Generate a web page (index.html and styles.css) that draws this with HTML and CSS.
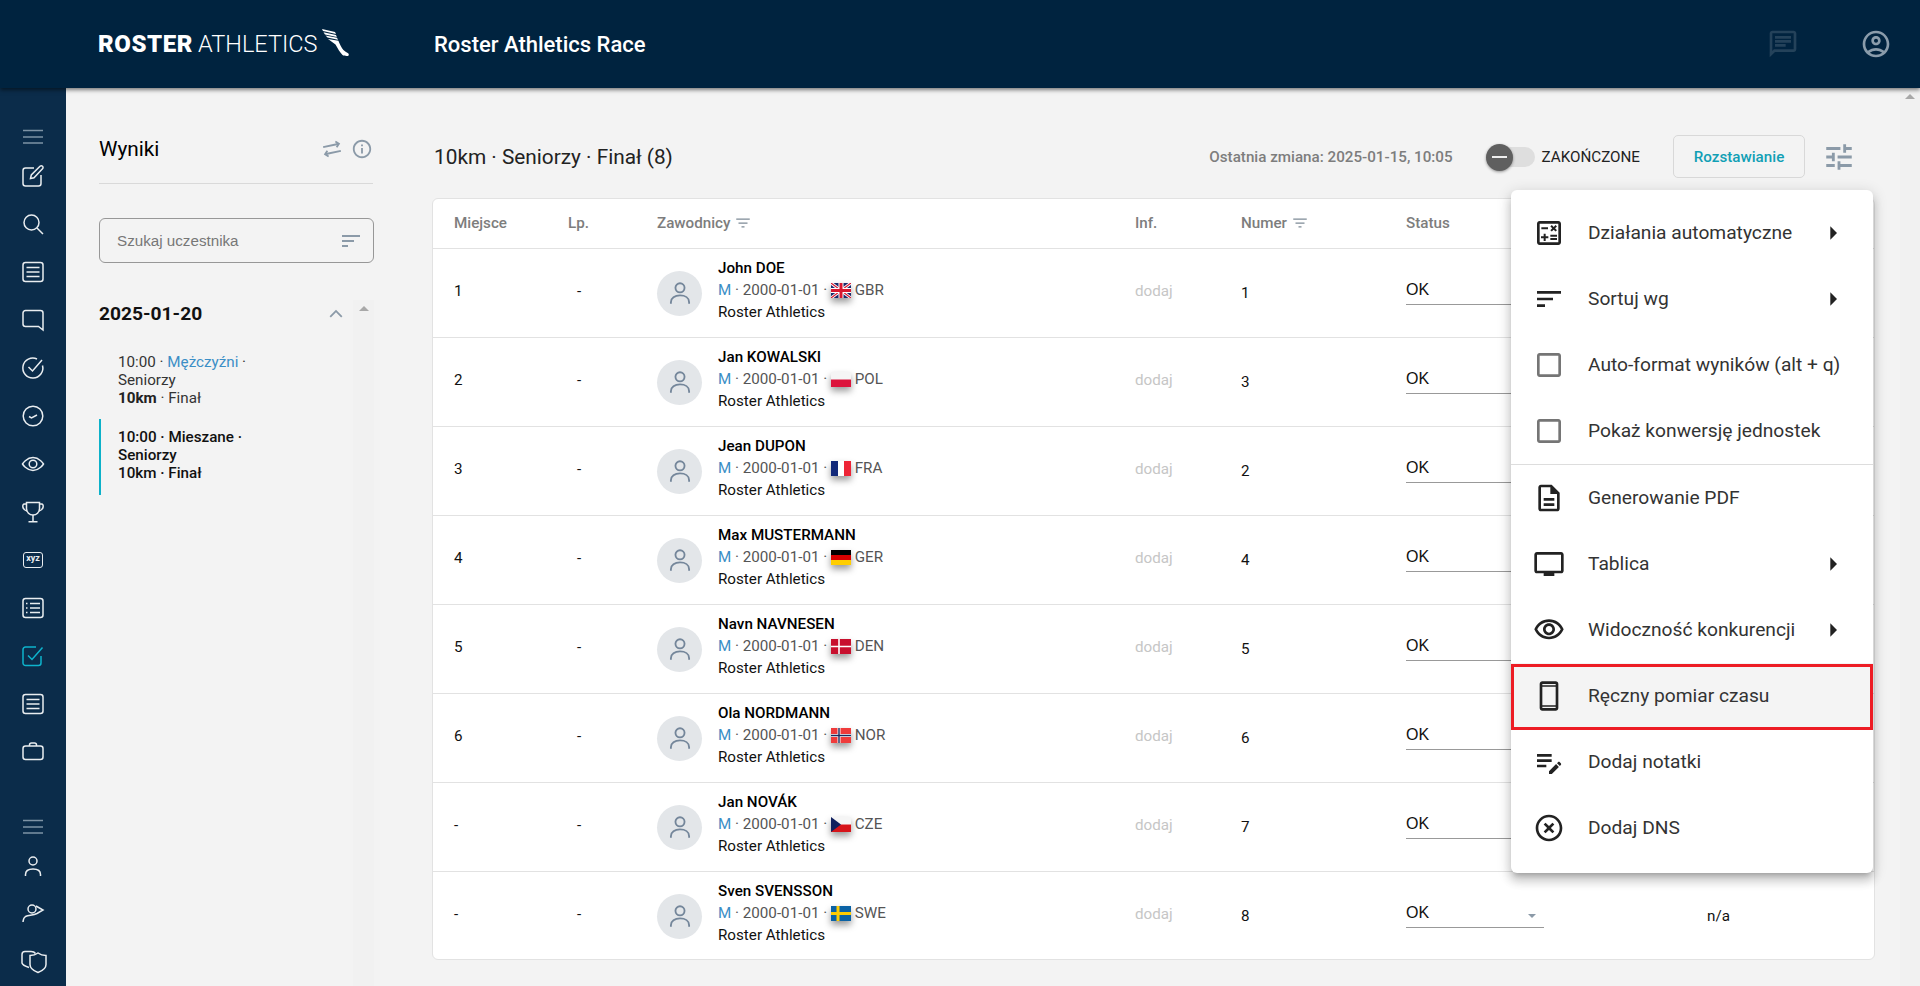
FILE: index.html
```html
<!DOCTYPE html>
<html lang="pl">
<head>
    <meta charset="UTF-8">
    <meta name="viewport" content="width=device-width, initial-scale=1.0">
    <title>Roster Athletics Race</title>
    <link rel="stylesheet" href="styles.css">
</head>
<body>
    <!-- shared icons -->
    <svg class="sprite" xmlns="http://www.w3.org/2000/svg">
        <symbol id="i-person" viewBox="0 0 24 24"><circle cx="12" cy="7.2" r="4.2"/><path d="M3.6 22v-1.5c0-4 3.6-6.3 8.4-6.3s8.4 2.3 8.4 6.3V22"/></symbol>
        <symbol id="i-filter" viewBox="0 0 24 24"><path d="M10 18h4v-1.6h-4zM3 6v1.6h18V6zm3 6.9h12v-1.6H6z"/></symbol>
        <symbol id="i-sort" viewBox="0 0 24 24"><path d="M3 18h6v-2H3zM3 6v2h18V6zm0 7h12v-2H3z"/></symbol>
        <symbol id="i-arrow" viewBox="0 0 24 24"><path d="M10 17l5-5-5-5z"/></symbol>
        <symbol id="i-box" viewBox="0 0 24 24"><path d="M19 5v14H5V5h14m0-2H5c-1.1 0-2 .9-2 2v14c0 1.1.9 2 2 2h14c1.1 0 2-.9 2-2V5c0-1.1-.9-2-2-2z"/></symbol>
        <symbol id="f-gbr" viewBox="0 0 20 15"><rect width="20" height="15" fill="#1b2a6b"/><path d="M0 0l20 15M20 0L0 15" stroke="#fff" stroke-width="3"/><path d="M0 0l20 15M20 0L0 15" stroke="#d8172f" stroke-width="1.2"/><path d="M10 0v15M0 7.5h20" stroke="#fff" stroke-width="5"/><path d="M10 0v15M0 7.5h20" stroke="#d8172f" stroke-width="3"/></symbol>
        <symbol id="f-pol" viewBox="0 0 20 15"><rect width="20" height="15" fill="#f5f5f5"/><rect y="7.5" width="20" height="7.5" fill="#dc143c"/></symbol>
        <symbol id="f-fra" viewBox="0 0 20 15"><rect width="7" height="15" fill="#12297a"/><rect x="7" width="6" height="15" fill="#fff"/><rect x="13" width="7" height="15" fill="#ee2436"/></symbol>
        <symbol id="f-ger" viewBox="0 0 20 15"><rect width="20" height="5" fill="#000"/><rect y="5" width="20" height="5" fill="#d80000"/><rect y="10" width="20" height="5" fill="#ffce00"/></symbol>
        <symbol id="f-den" viewBox="0 0 20 15"><rect width="20" height="15" fill="#c8102e"/><path d="M8 0v15M0 7.5h20" stroke="#fff" stroke-width="1.6"/></symbol>
        <symbol id="f-nor" viewBox="0 0 20 15"><rect width="20" height="15" fill="#ef3b3b"/><path d="M8 0v15M0 7.5h20" stroke="#fff" stroke-width="3"/><path d="M8 0v15M0 7.5h20" stroke="#1b2a5e" stroke-width="1.4"/></symbol>
        <symbol id="f-cze" viewBox="0 0 20 15"><rect width="20" height="7.5" fill="#f5f5f5"/><rect y="7.5" width="20" height="7.5" fill="#d7141a"/><path d="M0 0l10 7.5L0 15z" fill="#11215f"/></symbol>
        <symbol id="f-swe" viewBox="0 0 20 15"><rect width="20" height="15" fill="#0a62a5"/><path d="M7 0v15M0 7.5h20" stroke="#fecc02" stroke-width="3"/></symbol>
    </svg>

    <header class="topbar">
        <div class="logo">
            <span class="logo-bold">ROSTER</span>
            <span class="logo-light">ATHLETICS</span>
            <svg class="logo-wing" viewBox="0 0 28 28" fill="#fff">
                <path d="M1 0l13 3 1 2L2 2zM2.500 3.200L15 6l.8 2L4 5.400zM4.500 6.600L16 8.800l1 2L6.500 8.600zM7 10l10.400 1.800c1 3 3 6.800 5 9.200 1.500 1.500 3.800 2.500 5 3.500.6.800.6 2-.4 2.400-1 .2-4 .2-5.500-.8-2.500-2.500-5-7-7-10.500z"/>
            </svg>
        </div>
        <div class="app-title">Roster Athletics Race</div>
        <div class="topbar-icons">
            <svg class="topbar-chat" viewBox="0 0 24 24"><path d="M20 2H4c-1.100 0-1.990.9-1.990 2L2 22l4-4h14c1.100 0 2-.9 2-2V4c0-1.100-.9-2-2-2zm0 14H5.170L4 17.170V4h16v12zM6 12h8v2H6zm0-3h12v2H6zm0-3h12v2H6z"/></svg>
            <svg class="topbar-user" viewBox="0 0 24 24"><path d="M12 2C6.480 2 2 6.480 2 12s4.480 10 10 10 10-4.480 10-10S17.520 2 12 2zM7.350 18.500C8.660 17.560 10.260 17 12 17s3.340.56 4.650 1.500C15.340 19.440 13.740 20 12 20s-3.340-.56-4.650-1.500zm10.790-1.380C16.450 15.800 14.320 15 12 15s-4.450.8-6.140 2.120C4.700 15.730 4 13.950 4 12c0-4.420 3.580-8 8-8s8 3.580 8 8c0 1.950-.7 3.730-1.860 5.120z"/><path d="M12 6c-1.930 0-3.500 1.570-3.500 3.500S10.070 13 12 13s3.500-1.570 3.500-3.500S13.930 6 12 6zm0 5c-.83 0-1.500-.67-1.500-1.500S11.170 8 12 8s1.500.67 1.500 1.500S12.830 11 12 11z"/></svg>
        </div>
    </header>

    <div class="page">
        <nav class="sidebar">
            <svg class="nav-icon nav-dim" viewBox="0 0 24 24"><path d="M2 5.500h20M2 12h20M2 18h20"/></svg>
            <svg class="nav-icon" viewBox="0 0 24 24"><path d="M13 4H4.500A2.500 2.500 0 0 0 2 6.500v13A2.500 2.500 0 0 0 4.500 22h13a2.500 2.500 0 0 0 2.500-2.500V11"/><path d="M9.500 14.500l.8-3.500L19 2.300c.8-.7 1.800-.7 2.500 0s.7 1.800 0 2.500L13 13.700z"/></svg>
            <svg class="nav-icon" viewBox="0 0 24 24"><circle cx="10.500" cy="10.500" r="7.500"/><path d="M16 16l6 6"/></svg>
            <svg class="nav-icon" viewBox="0 0 24 24"><rect x="2" y="2.500" width="20" height="19" rx="2.500"/><path d="M5.500 7.500h13M5.500 12h13M5.500 16.500h13"/></svg>
            <svg class="nav-icon" viewBox="0 0 24 24"><path d="M4.500 2.500h15A2.500 2.500 0 0 1 22 5v17l-4.500-3.500h-13A2.500 2.500 0 0 1 2 16V5a2.500 2.500 0 0 1 2.500-2.500z"/></svg>
            <svg class="nav-icon" viewBox="0 0 24 24"><path d="M21.500 9.500A10 10 0 1 1 16 3"/><path d="M7.500 11l4 4 9.500-11"/></svg>
            <svg class="nav-icon" viewBox="0 0 24 24"><circle cx="12" cy="12" r="9.800"/><path d="M8 12.500l2.500 1.500 5.500-3"/></svg>
            <svg class="nav-icon" viewBox="0 0 24 24"><path d="M1.500 12S5.500 5.500 12 5.500 22.500 12 22.500 12 18.500 18.500 12 18.500 1.500 12 1.500 12z"/><circle cx="12" cy="12" r="3.800"/></svg>
            <svg class="nav-icon" viewBox="0 0 24 24"><path d="M5.500 2.500h13v6c0 4-3 6.500-6.500 6.500s-6.500-2.500-6.500-6.500z"/><path d="M5.500 4H3.500C2 4 1.500 5.500 2 7.500c.4 1.500 2 3 4 3.500M18.500 4h2c1.500 0 2 1.500 1.500 3.500-.4 1.500-2 3-4 3.500M12 15v6M7.500 21.800h9"/></svg>
            <div class="nav-xyz">xyz</div>
            <svg class="nav-icon" viewBox="0 0 24 24"><rect x="2" y="2.500" width="20" height="19" rx="2.500"/><path d="M5 7.500h1.500M5 12h1.500M5 16.500h1.500M9 7.500h10M9 12h10M9 16.500h10"/></svg>
            <svg class="nav-icon nav-active" viewBox="0 0 24 24"><path d="M20 12v7a2.500 2.500 0 0 1-2.500 2.500h-13A2.500 2.500 0 0 1 2 19V5.500A2.500 2.500 0 0 1 4.500 3H15"/><path d="M7 11.500l4 4L21.500 3.500"/></svg>
            <svg class="nav-icon" viewBox="0 0 24 24"><rect x="2" y="2.500" width="20" height="19" rx="2.500"/><path d="M5.500 7.500h13M5.500 12h13M5.500 16.500h13"/></svg>
            <svg class="nav-icon" viewBox="0 0 24 24"><rect x="2" y="6" width="20" height="13.500" rx="2.500"/><path d="M8.500 6V5a2 2 0 0 1 2-2h3a2 2 0 0 1 2 2v1"/></svg>
            <div class="nav-gap"></div>
            <svg class="nav-icon nav-dim" viewBox="0 0 24 24"><path d="M2 5.500h20M2 12h20M2 18h20"/></svg>
            <svg class="nav-icon" viewBox="0 0 24 24"><circle cx="12" cy="7" r="4"/><path d="M4.500 22v-1.500c0-3.800 3-5.500 7.500-5.500s7.500 1.700 7.500 5.500V22"/></svg>
            <svg class="nav-icon" viewBox="0 0 24 24"><circle cx="11" cy="7" r="4"/><path d="M15 4l7 4-6 3.500c-4 2-8 1.500-11.500 3C3 15.500 2.200 17.500 2 20"/></svg>
            <svg class="nav-icon nav-wide" viewBox="0 0 28 24"><path d="M9 17.500c-3-1-6.500-2.500-7-4.500V4.500C2 2.500 3 1.500 5 1.500h6c2 0 3.500.5 4.500 2"/><path d="M10 5.500c3.500 0 6-1 8-2.500 2 1.500 4.500 2.500 8 2.500v9c0 4-4 6.500-8 8-4-1.500-8-4-8-8z"/></svg>
        </nav>

        <main class="main">
            <section class="panel">
                <div class="panel-head">
                    <h1 class="panel-title">Wyniki</h1>
                    <svg class="panel-swap" viewBox="0 0 24 24"><path d="M7.410 13.410L6 12l-4 4 4 4 1.410-1.410L5.830 17H21v-2H5.830zm9.180-2.820L18 12l4-4-4-4-1.410 1.410L18.170 7H3v2h15.170z"/></svg>
                    <svg class="panel-info" viewBox="0 0 24 24"><path d="M11 7h2v2h-2zm0 4h2v6h-2zm1-9C6.480 2 2 6.480 2 12s4.480 10 10 10 10-4.480 10-10S17.520 2 12 2zm0 18c-4.410 0-8-3.590-8-8s3.590-8 8-8 8 3.590 8 8-3.590 8-8 8z"/></svg>
                </div>
                <div class="search">
                    <span class="search-text">Szukaj uczestnika</span>
                    <svg class="search-sort"><use href="#i-sort"/></svg>
                </div>
                <div class="date-row">
                    <span class="date">2025-01-20</span>
                    <svg class="date-chevron" viewBox="0 0 24 24"><path d="M12 8.500l-7 7 1.400 1.400 5.600-5.600 5.600 5.600 1.400-1.400z"/></svg>
                </div>
                <div class="event">
                    <div>10:00 · <span class="event-link">Mężczyźni</span> ·</div>
                    <div>Seniorzy</div>
                    <div><b>10km</b> · Finał</div>
                </div>
                <div class="event event-current">
                    <div>10:00 · Mieszane ·</div>
                    <div>Seniorzy</div>
                    <div>10km · Finał</div>
                </div>
                <div class="panel-scroll"><span class="scroll-up"></span></div>
            </section>

            <section class="results">
                <div class="toolbar">
                    <h2 class="results-title">10km · Seniorzy · Finał (8)</h2>
                    <span class="last-change">Ostatnia zmiana: 2025-01-15, 10:05</span>
                    <div class="toggle"><span class="toggle-thumb"></span></div>
                    <span class="toggle-label">ZAKOŃCZONE</span>
                    <button class="seed-button">Rozstawianie</button>
                    <svg class="tune" viewBox="0 0 24 24"><path d="M3 17v2h6v-2H3zM3 5v2h10V5H3zm10 16v-2h8v-2h-8v-2h-2v6h2zM7 9v2H3v2h4v2h2V9H7zm14 4v-2H11v2h10zm-6-4h2V7h4V5h-4V3h-2v6z"/></svg>
                </div>

                <div class="card">
                    <div class="row row-head">
                        <div>Miejsce</div>
                        <div>Lp.</div>
                        <div class="with-filter">Zawodnicy <svg class="head-filter"><use href="#i-filter"/></svg></div>
                        <div>Inf.</div>
                        <div class="with-filter">Numer <svg class="head-filter"><use href="#i-filter"/></svg></div>
                        <div>Status</div>
                    </div>

                    <div class="row">
                        <div>1</div><div class="lp">-</div>
                        <div class="athlete">
                            <div class="avatar"><svg><use href="#i-person"/></svg></div>
                            <div class="athlete-text">
                                <div class="athlete-name">John DOE</div>
                                <div class="athlete-meta"><span class="gender">M</span> · 2000-01-01 · <svg class="flag"><use href="#f-gbr"/></svg> GBR</div>
                                <div>Roster Athletics</div>
                            </div>
                        </div>
                        <div class="add">dodaj</div><div class="num">1</div>
                        <div class="select">OK</div><div class="num">n/a</div>
                    </div>
                    <div class="row">
                        <div>2</div><div class="lp">-</div>
                        <div class="athlete">
                            <div class="avatar"><svg><use href="#i-person"/></svg></div>
                            <div class="athlete-text">
                                <div class="athlete-name">Jan KOWALSKI</div>
                                <div class="athlete-meta"><span class="gender">M</span> · 2000-01-01 · <svg class="flag"><use href="#f-pol"/></svg> POL</div>
                                <div>Roster Athletics</div>
                            </div>
                        </div>
                        <div class="add">dodaj</div><div class="num">3</div>
                        <div class="select">OK</div><div class="num">n/a</div>
                    </div>
                    <div class="row">
                        <div>3</div><div class="lp">-</div>
                        <div class="athlete">
                            <div class="avatar"><svg><use href="#i-person"/></svg></div>
                            <div class="athlete-text">
                                <div class="athlete-name">Jean DUPON</div>
                                <div class="athlete-meta"><span class="gender">M</span> · 2000-01-01 · <svg class="flag"><use href="#f-fra"/></svg> FRA</div>
                                <div>Roster Athletics</div>
                            </div>
                        </div>
                        <div class="add">dodaj</div><div class="num">2</div>
                        <div class="select">OK</div><div class="num">n/a</div>
                    </div>
                    <div class="row">
                        <div>4</div><div class="lp">-</div>
                        <div class="athlete">
                            <div class="avatar"><svg><use href="#i-person"/></svg></div>
                            <div class="athlete-text">
                                <div class="athlete-name">Max MUSTERMANN</div>
                                <div class="athlete-meta"><span class="gender">M</span> · 2000-01-01 · <svg class="flag"><use href="#f-ger"/></svg> GER</div>
                                <div>Roster Athletics</div>
                            </div>
                        </div>
                        <div class="add">dodaj</div><div class="num">4</div>
                        <div class="select">OK</div><div class="num">n/a</div>
                    </div>
                    <div class="row">
                        <div>5</div><div class="lp">-</div>
                        <div class="athlete">
                            <div class="avatar"><svg><use href="#i-person"/></svg></div>
                            <div class="athlete-text">
                                <div class="athlete-name">Navn NAVNESEN</div>
                                <div class="athlete-meta"><span class="gender">M</span> · 2000-01-01 · <svg class="flag"><use href="#f-den"/></svg> DEN</div>
                                <div>Roster Athletics</div>
                            </div>
                        </div>
                        <div class="add">dodaj</div><div class="num">5</div>
                        <div class="select">OK</div><div class="num">n/a</div>
                    </div>
                    <div class="row">
                        <div>6</div><div class="lp">-</div>
                        <div class="athlete">
                            <div class="avatar"><svg><use href="#i-person"/></svg></div>
                            <div class="athlete-text">
                                <div class="athlete-name">Ola NORDMANN</div>
                                <div class="athlete-meta"><span class="gender">M</span> · 2000-01-01 · <svg class="flag"><use href="#f-nor"/></svg> NOR</div>
                                <div>Roster Athletics</div>
                            </div>
                        </div>
                        <div class="add">dodaj</div><div class="num">6</div>
                        <div class="select">OK</div><div class="num">n/a</div>
                    </div>
                    <div class="row">
                        <div>-</div><div class="lp">-</div>
                        <div class="athlete">
                            <div class="avatar"><svg><use href="#i-person"/></svg></div>
                            <div class="athlete-text">
                                <div class="athlete-name">Jan NOVÁK</div>
                                <div class="athlete-meta"><span class="gender">M</span> · 2000-01-01 · <svg class="flag"><use href="#f-cze"/></svg> CZE</div>
                                <div>Roster Athletics</div>
                            </div>
                        </div>
                        <div class="add">dodaj</div><div class="num">7</div>
                        <div class="select">OK</div><div class="num">n/a</div>
                    </div>
                    <div class="row">
                        <div>-</div><div class="lp">-</div>
                        <div class="athlete">
                            <div class="avatar"><svg><use href="#i-person"/></svg></div>
                            <div class="athlete-text">
                                <div class="athlete-name">Sven SVENSSON</div>
                                <div class="athlete-meta"><span class="gender">M</span> · 2000-01-01 · <svg class="flag"><use href="#f-swe"/></svg> SWE</div>
                                <div>Roster Athletics</div>
                            </div>
                        </div>
                        <div class="add">dodaj</div><div class="num">8</div>
                        <div class="select">OK</div><div class="num">n/a</div>
                    </div>
                </div>
            </section>

            <div class="page-scroll"><span class="scroll-up"></span></div>

            <!-- dropdown opened from the tune icon -->
            <div class="menu">
                <div class="menu-item">
                    <svg class="menu-icon" viewBox="0 0 24 24"><path d="M19 3H5c-1.100 0-2 .9-2 2v14c0 1.100.9 2 2 2h14c1.100 0 2-.9 2-2V5c0-1.100-.9-2-2-2zm0 16H5V5h14v14z"/><path d="M6.250 7.720h5v1.500h-5zM13 15.750h5v1.500h-5zM13 13.250h5v1.500h-5zM8 18h1.500v-2h2v-1.500h-2v-2H8v2H6V16h2zM14.090 10.950l1.410-1.410 1.410 1.410 1.060-1.060-1.410-1.420 1.410-1.410L16.910 6 15.500 7.410 14.090 6l-1.060 1.060 1.410 1.410-1.410 1.420z"/></svg>
                    <span>Działania automatyczne</span>
                    <svg class="menu-arrow"><use href="#i-arrow"/></svg>
                </div>
                <div class="menu-item">
                    <svg class="menu-icon"><use href="#i-sort"/></svg>
                    <span>Sortuj wg</span>
                    <svg class="menu-arrow"><use href="#i-arrow"/></svg>
                </div>
                <div class="menu-item">
                    <svg class="menu-icon menu-check"><use href="#i-box"/></svg>
                    <span>Auto-format wyników (alt + q)</span>
                </div>
                <div class="menu-item">
                    <svg class="menu-icon menu-check"><use href="#i-box"/></svg>
                    <span>Pokaż konwersję jednostek</span>
                </div>
                <div class="menu-divider"></div>
                <div class="menu-item">
                    <svg class="menu-icon" viewBox="0 0 24 24"><path d="M8 16h8v2H8zm0-4h8v2H8zm6-10H6c-1.100 0-2 .9-2 2v16c0 1.100.89 2 1.990 2H18c1.100 0 2-.9 2-2V8l-6-6zm4 18H6V4h7v5h5v11z"/></svg>
                    <span>Generowanie PDF</span>
                </div>
                <div class="menu-item">
                    <svg class="menu-icon" viewBox="0 0 24 24"><path d="M21 3H3c-1.100 0-2 .9-2 2v12c0 1.100.9 2 2 2h5v2h8v-2h5c1.100 0 1.990-.9 1.990-2L23 5c0-1.100-.9-2-2-2zm0 14H3V5h18v12z"/></svg>
                    <span>Tablica</span>
                    <svg class="menu-arrow"><use href="#i-arrow"/></svg>
                </div>
                <div class="menu-item">
                    <svg class="menu-icon" viewBox="0 0 24 24"><path d="M12 6c3.790 0 7.170 2.130 8.820 5.500C19.170 14.870 15.790 17 12 17s-7.170-2.130-8.820-5.500C4.830 8.130 8.210 6 12 6m0-2C7 4 2.730 7.110 1 11.500 2.730 15.890 7 19 12 19s9.270-3.110 11-7.500C21.270 7.110 17 4 12 4zm0 5c1.380 0 2.500 1.120 2.500 2.500S13.380 14 12 14s-2.500-1.120-2.500-2.500S10.620 9 12 9m0-2c-2.480 0-4.500 2.020-4.500 4.500S9.520 16 12 16s4.500-2.020 4.500-4.500S14.480 7 12 7z"/></svg>
                    <span>Widoczność konkurencji</span>
                    <svg class="menu-arrow"><use href="#i-arrow"/></svg>
                </div>
                <div class="menu-item menu-item-marked">
                    <svg class="menu-icon" viewBox="0 0 24 24"><path d="M17 1.010L7 1c-1.100 0-2 .9-2 2v18c0 1.100.9 2 2 2h10c1.100 0 2-.9 2-2V3c0-1.100-.9-1.990-2-1.990zM17 21H7v-1h10zm0-2H7V5h10zM7 4V3h10v1z"/></svg>
                    <span>Ręczny pomiar czasu</span>
                </div>
                <div class="menu-item">
                    <svg class="menu-icon" viewBox="0 0 24 24"><path d="M3 10h11v2H3zm0-2h11V6H3zm0 8h7v-2H3zm15.010-3.130l.71-.71c.39-.39 1.020-.39 1.410 0l.71.71c.39.39.39 1.020 0 1.410l-.71.71zm-.71.71l-5.300 5.300V21h2.120l5.300-5.300z"/></svg>
                    <span>Dodaj notatki</span>
                </div>
                <div class="menu-item">
                    <svg class="menu-icon" viewBox="0 0 24 24"><path d="M14.590 8L12 10.590 9.410 8 8 9.410 10.590 12 8 14.590 9.410 16 12 13.410 14.590 16 16 14.590 13.410 12 16 9.410 14.590 8zM12 2C6.470 2 2 6.470 2 12s4.470 10 10 10 10-4.470 10-10S17.530 2 12 2zm0 18c-4.410 0-8-3.590-8-8s3.590-8 8-8 8 3.590 8 8-3.590 8-8 8z"/></svg>
                    <span>Dodaj DNS</span>
                </div>
            </div>
        </main>
    </div>
</body>
</html>
```

FILE: styles.css
```css
* {
    box-sizing: border-box;
}

html, body {
    height: 986px;
    overflow: hidden;
}

body {
    margin: 0;
    font-family: Roboto, "Liberation Sans", sans-serif;
    font-size: 15.2px;
    color: #111;
    background-color: #f3f3f3;
}

.sprite {
    display: none;
}

/* Top bar */
.topbar {
    position: relative;
    z-index: 5;
    display: flex;
    align-items: center;
    height: 88px;
    padding-left: 98px;
    background-color: #00233f;
    color: #fff;
    box-shadow: 0 2px 4px rgba(0,0,0,0.5);
}

.logo {
    display: flex;
    align-items: center;
    width: 336px;
    font-size: 24px;
}

.logo-bold {
    font-weight: 900;
    letter-spacing: 0.6px;
    margin-right: 5px;
}

.logo-light {
    font-size: 23.5px;
    font-weight: 300;
}

.logo-wing {
    width: 28px;
    height: 28px;
    margin-left: 4px;
    margin-top: -2px;
}

.app-title {
    font-size: 22px;
    font-weight: 500;
}

.topbar-icons {
    display: flex;
    align-items: center;
    margin-left: auto;
    padding-right: 28px;
    gap: 61px;
}

.topbar-chat {
    width: 32px;
    height: 32px;
    fill: #24425a;
}

.topbar-user {
    width: 32px;
    height: 32px;
    fill: #8a9cab;
}

/* Sidebar */
.page {
    display: flex;
    height: 898px;
    overflow: hidden;
}

.sidebar {
    display: flex;
    flex-direction: column;
    align-items: center;
    gap: 24px;
    width: 66px;
    padding-top: 37px;
    flex-shrink: 0;
    background-color: #0b2c4a;
}

.nav-icon {
    width: 24px;
    height: 24px;
    flex-shrink: 0;
    fill: none;
    stroke: #e9edf0;
    stroke-width: 1.5;
}

.nav-dim {
    margin-bottom: -9px;
    stroke: #7e93a5;
}

.nav-active {
    stroke: #0eb3cc;
}

.nav-wide {
    width: 28px;
    margin-left: 1px;
}

.nav-xyz {
    flex-shrink: 0;
    width: 20px;
    height: 16px;
    margin: 4px 0;
    border: 1.500px solid #e9edf0;
    border-radius: 3px;
    color: #e9edf0;
    font-size: 9px;
    font-weight: 700;
    line-height: 11px;
    text-align: center;
}

.nav-gap {
    flex-shrink: 0;
    height: 3px;
}

/* Left panel */
.main {
    position: relative;
    display: flex;
    flex: 1;
    min-width: 0;
}

.panel {
    position: relative;
    width: 366px;
    flex-shrink: 0;
    padding: 40px 59px 0 33px;
}

.panel-head {
    display: flex;
    align-items: center;
    height: 56px;
    padding-top: 2px;
    padding-bottom: 16px;
    border-bottom: 1px solid #d9d9d9;
}

.panel-title {
    margin: 0 auto 0 0;
    font-size: 20.800px;
    font-weight: 400;
    color: #000;
}

.panel-swap {
    width: 22px;
    height: 22px;
    fill: #8b9aa8;
    transform: rotate(-12deg);
}

.panel-info {
    width: 22px;
    height: 22px;
    margin-left: 8px;
    fill: #8b9aa8;
}

.search {
    display: flex;
    align-items: center;
    justify-content: space-between;
    height: 45px;
    margin-top: 34px;
    margin-right: -1px;
    padding: 0 10px 0 17px;
    border: 1px solid #979797;
    border-radius: 6px;
}

.search-text {
    font-family: "Liberation Sans", sans-serif;
    color: #777;
}

.search-sort {
    width: 24px;
    height: 24px;
    fill: #8b9aa8;
}

.date-row {
    display: flex;
    align-items: center;
    justify-content: space-between;
    height: 30px;
    margin-top: 35px;
    margin-bottom: 16px;
    padding-right: 26px;
}

.date {
    font-size: 19.200px;
    font-weight: 700;
    color: #111;
}

.date-chevron {
    width: 22px;
    height: 22px;
    fill: #8b9aa8;
}

.event {
    padding: 9px 20px 9px 19px;
    line-height: 18px;
    color: #333;
}

.event + .event {
    margin-top: 3px;
}

.event b {
    font-weight: 700;
    color: #222;
}

.event-link {
    color: #3b8ec6;
}

.event-current {
    padding-bottom: 13px;
    padding-left: 17px;
    border-left: 2px solid #0cb1c9;
    font-weight: 500;
    color: #111;
}

.panel-scroll {
    position: absolute;
    top: 212px;
    bottom: 0;
    left: 287px;
    width: 21px;
    background-color: #f1f1f1;
}

.scroll-up {
    display: block;
    width: 0;
    height: 0;
    margin: 0 auto;
    border-left: 5px solid transparent;
    border-right: 5px solid transparent;
    border-bottom: 5px solid #a8a8a8;
}

.panel-scroll .scroll-up {
    margin-top: 6px;
}

/* Results */
.results {
    flex: 1;
    min-width: 0;
    padding-top: 47px;
    padding-right: 25px;
}

.toolbar {
    display: flex;
    align-items: center;
    height: 43px;
    margin-bottom: 20px;
    padding-left: 2px;
}

.results-title {
    margin: 0 auto 0 0;
    font-size: 20.800px;
    font-weight: 400;
    color: #222;
}

.last-change {
    font-weight: 500;
    color: #7d7d7d;
}

.toggle {
    position: relative;
    width: 35px;
    height: 20px;
    margin-left: 47px;
    border-radius: 0 10px 10px 0;
    background-color: #dedede;
}

.toggle-thumb {
    position: absolute;
    top: -3px;
    left: -14px;
    width: 27px;
    height: 27px;
    border-radius: 50%;
    background-color: #5f5f5f;
    box-shadow: 0 1px 3px rgba(0,0,0,0.4);
}

.toggle-thumb:after {
    content: '';
    position: absolute;
    top: 12px;
    left: 6px;
    width: 15px;
    height: 2.500px;
    background-color: #eee;
}

.toggle-label {
    margin-left: 7px;
    color: #222;
}

.seed-button {
    width: 132px;
    height: 43px;
    margin-left: 33px;
    border: 1px solid #d8d8d8;
    border-radius: 5px;
    background: transparent;
    font-family: Roboto, sans-serif;
    font-size: 15.200px;
    font-weight: 500;
    color: #119fb5;
}

.tune {
    width: 34px;
    height: 34px;
    margin-left: 17px;
    margin-right: 19px;
    fill: #8b9aa8;
}

.card {
    height: 762px;
    border: 1px solid #e2e2e2;
    border-radius: 6px;
    background-color: #fff;
}

.row {
    display: grid;
    grid-template-columns: 114px 89px 478px 106px 165px 301px 1fr;
    align-items: center;
    height: 89px;
    padding-left: 21px;
    padding-bottom: 4px;
    border-top: 1px solid #e2e2e2;
}

.row-head {
    height: 49px;
    padding-bottom: 2px;
    border-top: 0;
    font-weight: 500;
    color: #7d7d7d;
}

.with-filter {
    display: flex;
    align-items: center;
    gap: 4px;
}

.head-filter {
    width: 18px;
    height: 18px;
    fill: #7d8a96;
}

.lp {
    width: 22px;
    text-align: center;
}

.athlete {
    display: flex;
    align-items: center;
    gap: 16px;
    line-height: 22px;
}

.avatar {
    display: flex;
    align-items: center;
    justify-content: center;
    width: 45px;
    height: 45px;
    margin-top: 4px;
    border-radius: 50%;
    background-color: #e3e6e9;
}

.avatar svg {
    width: 26px;
    height: 26px;
    fill: none;
    stroke: #74869a;
    stroke-width: 1.700;
}

.athlete-text {
    margin-top: -2px;
}

.athlete-name {
    font-weight: 500;
    color: #000;
}

.athlete-meta {
    display: flex;
    align-items: center;
    white-space: pre;
    color: #555;
}

.gender {
    color: #3b8ec6;
}

.flag {
    width: 20px;
    height: 15px;
    box-shadow: 0 4px 7px rgba(0,0,0,0.4);
}

.add {
    color: #c6c6c6;
}

.num {
    padding-top: 3px;
}

.select {
    position: relative;
    width: 138px;
    height: 26px;
    margin-top: 2px;
    border-bottom: 1px solid #999;
    font-family: "Liberation Sans", sans-serif;
    font-size: 16px;
    line-height: 21px;
}

.select:after {
    content: '';
    position: absolute;
    top: 12px;
    right: 8px;
    border-left: 4px solid transparent;
    border-right: 4px solid transparent;
    border-top: 4px solid #8b9aa8;
}

.page-scroll {
    width: 20px;
    flex-shrink: 0;
    padding-top: 6px;
    background-color: #f1f1f1;
}

/* Menu */
.menu {
    position: absolute;
    top: 102px;
    right: 47px;
    z-index: 3;
    width: 362px;
    padding: 10px 0 12px;
    border-radius: 6px;
    background-color: #fff;
    box-shadow: 0 5px 5px -3px rgba(0,0,0,0.2), 0 8px 10px 1px rgba(0,0,0,0.14), 0 3px 14px 2px rgba(0,0,0,0.12);
}

.menu-item {
    position: relative;
    display: flex;
    align-items: center;
    height: 66px;
    padding: 0 24px 0 22px;
    font-size: 19.200px;
    color: #333;
}

.menu-item > span {
    margin-left: 23px;
    margin-top: -2px;
}

.menu-icon {
    width: 32px;
    height: 32px;
    flex-shrink: 0;
    fill: #222;
}

.menu-check {
    fill: #757575;
}

.menu-arrow {
    width: 32px;
    height: 32px;
    margin-left: auto;
    fill: #222;
}

.menu-divider {
    height: 1px;
    background-color: #ddd;
}

.menu-item-marked {
    background-color: #f4f4f4;
}

.menu-item-marked:after {
    content: '';
    position: absolute;
    top: 1px;
    right: 0;
    bottom: -1px;
    left: 0;
    border: 3px solid #ed1c24;
}
```
